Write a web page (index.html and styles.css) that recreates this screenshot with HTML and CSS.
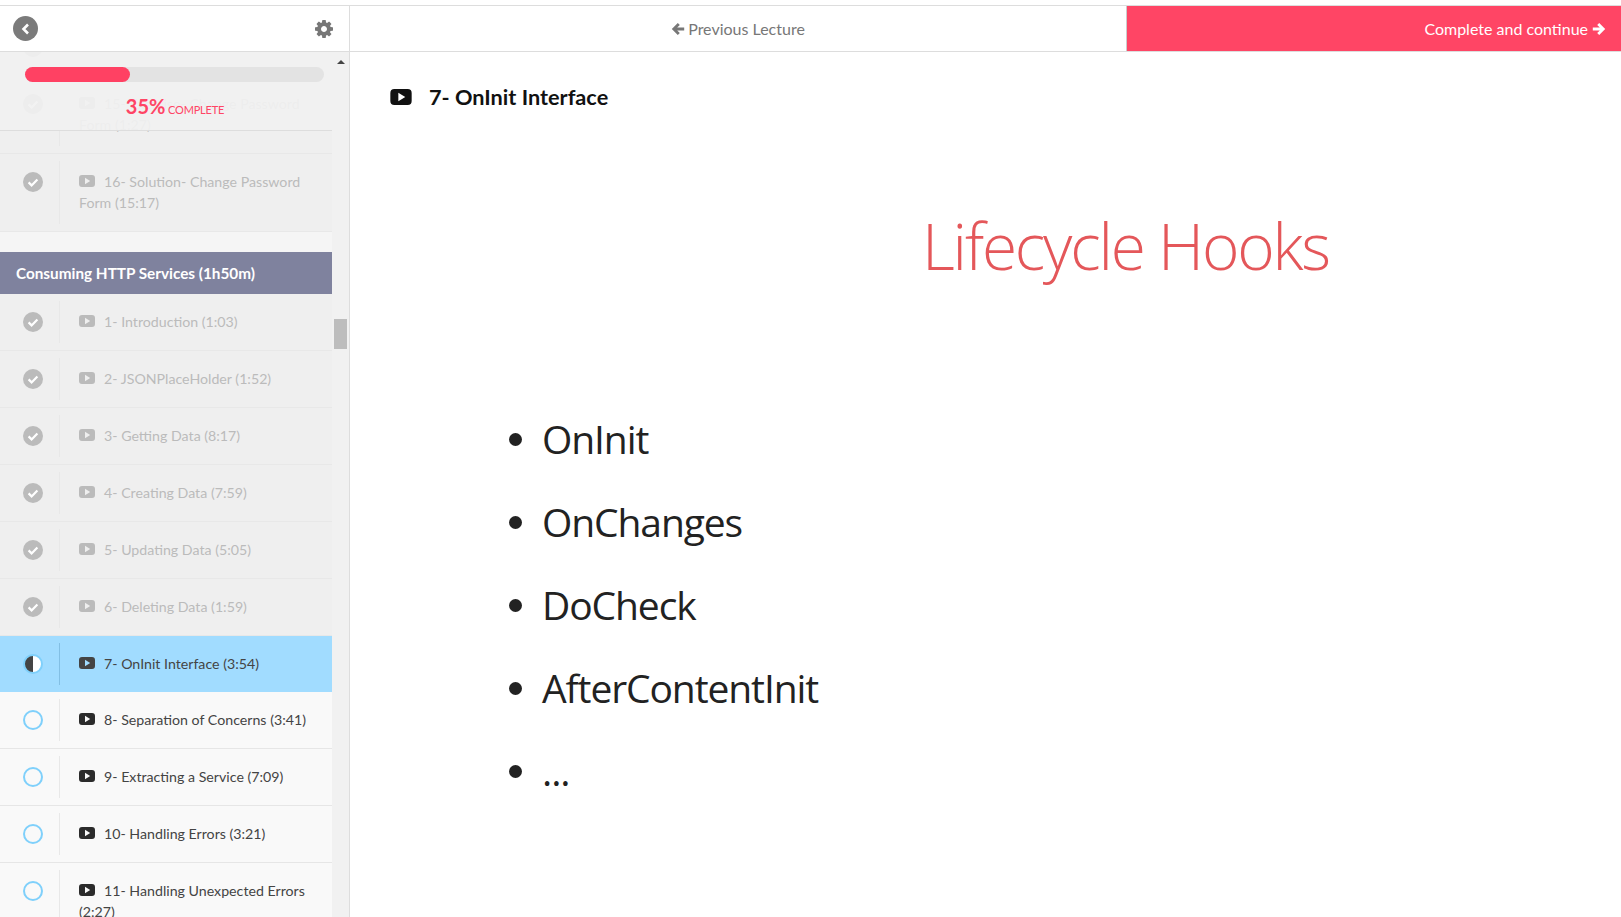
FILE: index.html
```html
<!DOCTYPE html>
<html>
<head>
  <title>7- OnInit Interface</title>
  <link rel="stylesheet" href="styles.css">
</head>
<body>

<svg class="defs" width="0" height="0">
  <symbol id="play" viewBox="0 0 16 12">
    <path fill-rule="evenodd" d="M3 0h10a3 3 0 0 1 3 3v6a3 3 0 0 1-3 3H3a3 3 0 0 1-3-3V3a3 3 0 0 1 3-3zM6 2.8v6.4L11.2 6z"/>
  </symbol>
  <symbol id="check" viewBox="0 0 20 20">
    <circle cx="10" cy="10" r="10"/>
    <path d="M5.6 10.4l3 3 5.8-6" fill="none" stroke="#fff" stroke-width="2.2"/>
  </symbol>
  <symbol id="arrow-right" viewBox="0 0 14 14">
    <path d="M7.2 1l6 6-6 6-2-2 2.6-2.6H.8V5.6h7L5.2 3z"/>
  </symbol>
  <symbol id="arrow-left" viewBox="0 0 14 14">
    <path d="M6.8 1l-6 6 6 6 2-2-2.6-2.6h7V5.6h-7L8.8 3z"/>
  </symbol>
</svg>

<div class="page">
  <div class="topbar">
    <div class="topbar-side">
      <a class="back-btn">
        <svg width="12" height="14" viewBox="0 0 12 14"><path d="M8 2.5L3.5 7 8 11.5" fill="none" stroke="#fff" stroke-width="2.6"/></svg>
      </a>
      <svg class="gear" width="18" height="18" viewBox="0 0 1536 1536"><path d="M1024 768q0-106-75-181t-181-75-181 75-75 181 75 181 181 75 181-75 75-181zm512-109v222q0 12-8 23t-20 13l-185 28q-19 54-39 91 35 50 107 138 10 12 10 25t-9 23q-27 37-99 108t-94 71q-12 0-26-9l-138-108q-44 23-91 38-16 136-29 186-7 28-36 28h-222q-14 0-24.5-8.5t-11.5-21.5l-28-184q-49-16-90-37l-141 107q-10 9-25 9-14 0-25-11-126-114-165-168-7-10-7-23 0-12 8-23 15-21 51-66.5t54-70.5q-27-50-41-99l-183-27q-13-2-21-12.5t-8-23.5v-222q0-12 8-23t19-13l186-28q14-46 39-92-40-57-107-138-10-12-10-24 0-10 9-23 26-36 98.5-107.5t94.5-71.5q13 0 26 10l138 107q44-23 91-38 16-136 29-186 7-28 36-28h222q14 0 24.5 8.5t11.5 21.5l28 184q49 16 90 37l142-107q9-9 24-9 13 0 25 10 129 119 165 170 7 8 7 22 0 12-8 23-15 21-51 66.5t-54 70.5q26 50 41 98l183 28q13 2 21 12.5t8 23.5z"/></svg>
    </div>
    <a class="prev-link"><svg class="arrow" width="14" height="14"><use href="#arrow-left"/></svg> Previous Lecture</a>
    <a class="next-btn">Complete and continue <svg class="arrow" width="14" height="14"><use href="#arrow-right"/></svg></a>
  </div>

  <div class="layout">
    <div class="sidebar">
      <div class="progress-box">
        <div class="progress-track"><div class="progress-fill"></div></div>
        <div class="progress-text"><span class="percent">35%</span> COMPLETE</div>
      </div>

      <div class="curriculum">
        <div class="items">
          <div class="item done">
            <div class="status"><svg class="check" width="20" height="20"><use href="#check"/></svg></div>
            <div class="label"></div>
          </div>
          <div class="item done">
            <div class="status"><svg class="check" width="20" height="20"><use href="#check"/></svg></div>
            <div class="label"><svg class="play" width="16" height="12"><use href="#play"/></svg>15- Exercise- Change Password Form (1:27)</div>
          </div>
          <div class="item done">
            <div class="status"><svg class="check" width="20" height="20"><use href="#check"/></svg></div>
            <div class="label"><svg class="play" width="16" height="12"><use href="#play"/></svg>16- Solution- Change Password Form (15:17)</div>
          </div>
        </div>

        <div class="section-title">Consuming HTTP Services (1h50m)</div>

        <div class="item done">
          <div class="status"><svg class="check" width="20" height="20"><use href="#check"/></svg></div>
          <div class="label"><svg class="play" width="16" height="12"><use href="#play"/></svg>1- Introduction (1:03)</div>
        </div>
        <div class="item done">
          <div class="status"><svg class="check" width="20" height="20"><use href="#check"/></svg></div>
          <div class="label"><svg class="play" width="16" height="12"><use href="#play"/></svg>2- JSONPlaceHolder (1:52)</div>
        </div>
        <div class="item done">
          <div class="status"><svg class="check" width="20" height="20"><use href="#check"/></svg></div>
          <div class="label"><svg class="play" width="16" height="12"><use href="#play"/></svg>3- Getting Data (8:17)</div>
        </div>
        <div class="item done">
          <div class="status"><svg class="check" width="20" height="20"><use href="#check"/></svg></div>
          <div class="label"><svg class="play" width="16" height="12"><use href="#play"/></svg>4- Creating Data (7:59)</div>
        </div>
        <div class="item done">
          <div class="status"><svg class="check" width="20" height="20"><use href="#check"/></svg></div>
          <div class="label"><svg class="play" width="16" height="12"><use href="#play"/></svg>5- Updating Data (5:05)</div>
        </div>
        <div class="item done">
          <div class="status"><svg class="check" width="20" height="20"><use href="#check"/></svg></div>
          <div class="label"><svg class="play" width="16" height="12"><use href="#play"/></svg>6- Deleting Data (1:59)</div>
        </div>
        <div class="item active">
          <div class="status"><div class="half"></div></div>
          <div class="label"><svg class="play" width="16" height="12"><use href="#play"/></svg>7- OnInit Interface (3:54)</div>
        </div>
        <div class="item">
          <div class="status"><div class="ring"></div></div>
          <div class="label"><svg class="play" width="16" height="12"><use href="#play"/></svg>8- Separation of Concerns (3:41)</div>
        </div>
        <div class="item">
          <div class="status"><div class="ring"></div></div>
          <div class="label"><svg class="play" width="16" height="12"><use href="#play"/></svg>9- Extracting a Service (7:09)</div>
        </div>
        <div class="item">
          <div class="status"><div class="ring"></div></div>
          <div class="label"><svg class="play" width="16" height="12"><use href="#play"/></svg>10- Handling Errors (3:21)</div>
        </div>
        <div class="item">
          <div class="status"><div class="ring"></div></div>
          <div class="label"><svg class="play" width="16" height="12"><use href="#play"/></svg>11- Handling Unexpected Errors (2:27)</div>
        </div>
      </div>

      <div class="scroll-track">
        <div class="scroll-up"></div>
        <div class="scroll-thumb"></div>
      </div>
    </div>

    <div class="content">
      <h2 class="lecture-title"><svg class="title-play" width="22" height="16"><use href="#play"/></svg>7- OnInit Interface</h2>
      <div class="slide">
        <div class="slide-heading">Lifecycle Hooks</div>
        <ul class="slide-list">
          <li>OnInit</li>
          <li>OnChanges</li>
          <li>DoCheck</li>
          <li>AfterContentInit</li>
          <li>...</li>
        </ul>
      </div>
    </div>
  </div>
</div>

</body>
</html>
```

FILE: styles.css
```css
html, body {
  margin: 0;
  height: 100%;
  background-color: #ffffff;
  font-family: "Lato", "Liberation Sans", sans-serif;
}

.defs {
  display: block;
  height: 0;
}

.page {
  height: 100%;
  box-sizing: border-box;
  padding-top: 5px;
  display: flex;
  flex-direction: column;
  overflow: hidden;
}

/* top bar */
.topbar {
  display: flex;
  flex: none;
  height: 45px;
  border-top: 1px solid #dddddd;
  border-bottom: 1px solid #dddddd;
}

.topbar-side {
  width: 350px;
  box-sizing: border-box;
  flex: none;
  padding: 0 16px 0 13px;
  display: flex;
  align-items: center;
  justify-content: space-between;
  border-right: 1px solid #dddddd;
}

.back-btn {
  width: 25px;
  height: 25px;
  border-radius: 50%;
  background-color: #7b7b7b;
  display: flex;
  align-items: center;
  justify-content: center;
}

.gear {
  fill: #777777;
}

.prev-link {
  flex: 1;
  display: flex;
  align-items: center;
  justify-content: center;
  gap: 3px;
  color: #777777;
  fill: #777777;
  font-size: 16px;
}

.next-btn {
  width: 495px;
  box-sizing: border-box;
  flex: none;
  padding-right: 15px;
  display: flex;
  align-items: center;
  justify-content: flex-end;
  gap: 4px;
  background-color: #ff4565;
  border-left: 1px solid #cccccc;
  color: #ffffff;
  fill: #ffffff;
  font-size: 16px;
}

/* sidebar */
.layout {
  flex: 1;
  display: flex;
  min-height: 0;
}

.sidebar {
  position: relative;
  width: 350px;
  flex: none;
  display: flex;
  border-right: 1px solid #dddddd;
  box-sizing: border-box;
}

.progress-box {
  position: absolute;
  top: 0;
  left: 0;
  right: 17px;
  height: 79px;
  box-sizing: border-box;
  padding: 15px 8px 0 25px;
  background-color: rgba(241, 241, 241, 0.92);
  border-bottom: 1px solid #dddddd;
  text-align: center;
}

.progress-track {
  height: 15px;
  border-radius: 8px;
  background-color: #e3e3e3;
}

.progress-fill {
  width: 35%;
  height: 100%;
  border-radius: 8px;
  background-color: #ff4163;
}

.progress-text {
  margin-top: 12px;
  padding-left: 1px;
  color: #ff4565;
  font-size: 11px;
  line-height: 24px;
  letter-spacing: -0.2px;
}

.percent {
  font-size: 20px;
  font-weight: 700;
  letter-spacing: 0;
}

.curriculum {
  width: 332px;
  flex: none;
  overflow: hidden;
  background-color: #f5f5f5;
}

.items {
  margin-top: -33px;
  padding-bottom: 20px;
}

.item {
  display: flex;
  padding: 7px 0;
  background-color: #f9f9f9;
  border-bottom: 1px solid #e6e6e6;
}

.item.done {
  background-color: #efefef;
  border-bottom-color: #e8e8e8;
  color: #bbbbbb;
  fill: #bbbbbb;
}

.item.active {
  background-color: #a1dcff;
  border-bottom: 0;
}

.status {
  width: 60px;
  box-sizing: border-box;
  flex: none;
  padding: 11px 0 0 23px;
  border-right: 1px solid #e8e8e8;
}

.active .status {
  border-right-color: #82bfe4;
}

.check {
  display: block;
}

.ring, .half {
  width: 20px;
  height: 20px;
  box-sizing: border-box;
  border-radius: 50%;
  border: 2px solid #7fd0fb;
}

.half {
  background: linear-gradient(90deg, #444444 50%, #ffffff 50%);
}

.label {
  flex: 1;
  min-height: 21px;
  padding: 10px 14px 11px 19px;
  color: #444444;
  fill: #2b2b2b;
  font-size: 14.2px;
  line-height: 21px;
}

.done .label {
  color: #bbbbbb;
  fill: #bbbbbb;
}

.active .label {
  fill: #444444;
}

.play {
  margin-right: 9px;
}

.section-title {
  height: 42px;
  box-sizing: border-box;
  padding-left: 16px;
  background-color: #7f829e;
  color: #ffffff;
  font-size: 15.3px;
  font-weight: 700;
  line-height: 42px;
}

.scroll-track {
  flex: 1;
  background-color: #f1f1f1;
}

.scroll-up {
  width: 0;
  margin: 8px auto 0;
  border: 4px solid transparent;
  border-top: 0;
  border-bottom: 4px solid #444444;
}

.scroll-thumb {
  width: 13px;
  height: 30px;
  margin: 255px auto 0;
  background-color: #bdbdbd;
}

/* lecture */
.content {
  flex: 1;
  min-width: 0;
}

.lecture-title {
  margin: 0;
  padding: 30px 0 0 40px;
  display: flex;
  align-items: center;
  color: #111111;
  fill: #111111;
  font-size: 21.7px;
  font-weight: 700;
  line-height: 30px;
}

.title-play {
  margin-right: 17px;
}

.slide {
  padding: 94px 0 0 159px;
  color: #222222;
  font-family: "Open Sans", sans-serif;
}

.slide-heading {
  margin-left: 413px;
  color: #e4575a;
  font-size: 64px;
  font-weight: 300;
  line-height: 80px;
  letter-spacing: -2.2px;
}

.slide-list {
  list-style: none;
  margin: 125px 0 0;
  padding: 0;
  display: flex;
  flex-direction: column;
  gap: 27px;
  font-size: 39px;
  line-height: 56px;
  letter-spacing: -1.1px;
}

.slide-list li {
  display: flex;
  align-items: center;
  gap: 20px;
}

.slide-list li::before {
  content: "";
  width: 13px;
  height: 13px;
  border-radius: 50%;
  background-color: #222222;
}
```
